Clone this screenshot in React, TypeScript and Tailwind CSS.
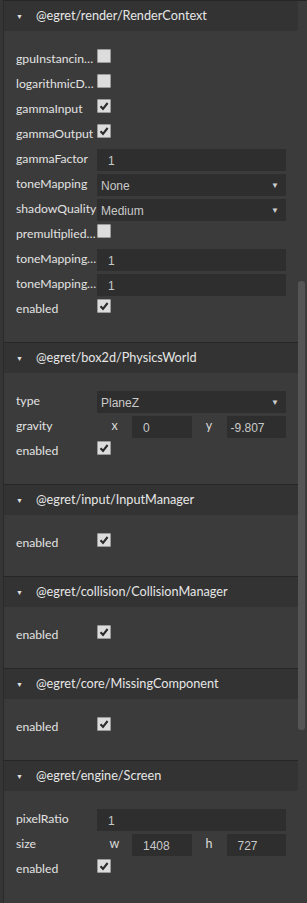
import React from "react";

type Row =
  | { kind: "check"; label: string; checked: boolean }
  | { kind: "number"; label: string; value: string }
  | { kind: "select"; label: string; value: string }
  | { kind: "vector"; label: string; a: [string, string]; b: [string, string]; tightB?: boolean };

type Section = { title: string; rows: Row[] };

const sections: Section[] = [
  {
    title: "@egret/render/RenderContext",
    rows: [
      { kind: "check", label: "gpuInstancingEnabled", checked: false },
      { kind: "check", label: "logarithmicDepthBuffer", checked: false },
      { kind: "check", label: "gammaInput", checked: true },
      { kind: "check", label: "gammaOutput", checked: true },
      { kind: "number", label: "gammaFactor", value: "1" },
      { kind: "select", label: "toneMapping", value: "None" },
      { kind: "select", label: "shadowQuality", value: "Medium" },
      { kind: "check", label: "premultipliedAlpha", checked: false },
      { kind: "number", label: "toneMappingExposure", value: "1" },
      { kind: "number", label: "toneMappingWhitePoint", value: "1" },
      { kind: "check", label: "enabled", checked: true },
    ],
  },
  {
    title: "@egret/box2d/PhysicsWorld",
    rows: [
      { kind: "select", label: "type", value: "PlaneZ" },
      { kind: "vector", label: "gravity", a: ["x", "0"], b: ["y", "-9.807"], tightB: true },
      { kind: "check", label: "enabled", checked: true },
    ],
  },
  { title: "@egret/input/InputManager", rows: [{ kind: "check", label: "enabled", checked: true }] },
  { title: "@egret/collision/CollisionManager", rows: [{ kind: "check", label: "enabled", checked: true }] },
  { title: "@egret/core/MissingComponent", rows: [{ kind: "check", label: "enabled", checked: true }] },
  {
    title: "@egret/engine/Screen",
    rows: [
      { kind: "number", label: "pixelRatio", value: "1" },
      { kind: "vector", label: "size", a: ["w", "1408"], b: ["h", "727"] },
      { kind: "check", label: "enabled", checked: true },
    ],
  },
];

const valueFont = "font-['Liberation_Sans',Arial,sans-serif] text-[12px] text-[#c9c9c9]";

function Checkbox({ checked }: { checked: boolean }) {
  return (
    <div className="flex h-[14px] w-[14px] items-center justify-center rounded-[1px] border border-[#9a9a9a] bg-[#dcdcdc]">
      {checked && (
        <svg width="10" height="10" viewBox="0 0 10 10">
          <path d="M1.5 5.3 L4 7.8 L8.6 2" fill="none" stroke="#2b2b2b" strokeWidth="2.1" />
        </svg>
      )}
    </div>
  );
}

function Field({ row }: { row: Row }) {
  if (row.kind === "check") {
    return <Checkbox checked={row.checked} />;
  }
  if (row.kind === "number") {
    return (
      <div className={`flex h-[22px] flex-1 items-center bg-[#2e2e2e] pl-[11px] pt-[2px] ${valueFont}`}>{row.value}</div>
    );
  }
  if (row.kind === "select") {
    return (
      <div className={`flex h-[22px] flex-1 items-center justify-between bg-[#2e2e2e] pl-[4px] pr-[7px] pt-[2px] ${valueFont}`}>
        <span>{row.value}</span>
        <span className="text-[8px] text-[#cfcfcf]">▼</span>
      </div>
    );
  }
  return (
    <div className="flex flex-1">
      <div className="flex flex-1">
        <span className="w-[35px] pt-[1px] text-center text-[12.5px] text-[#dcdcdc]">{row.a[0]}</span>
        <div className={`flex h-[22px] flex-1 items-center bg-[#2e2e2e] pl-[11px] pt-[2px] ${valueFont}`}>{row.a[1]}</div>
      </div>
      <div className="flex flex-1">
        <span className="w-[35px] pt-[1px] text-center text-[12.5px] text-[#dcdcdc]">{row.b[0]}</span>
        <div
          className={`flex h-[22px] flex-1 items-center bg-[#2e2e2e] pt-[2px] ${row.tightB ? "pl-[4px]" : "pl-[11px]"} ${valueFont}`}
        >
          {row.b[1]}
        </div>
      </div>
    </div>
  );
}

function Panel({ section }: { section: Section }) {
  return (
    <div className="border-t border-[#262626]">
      <div className="flex h-[30px] items-center bg-[#333333] pl-[12px]">
        <span className="w-[20px] text-[7px] text-[#e0e0e0]">▼</span>
        <span className="text-[12.7px] text-[#e6e6e6]">{section.title}</span>
      </div>
      <div className="pb-[21px] pl-[12px] pr-[12px] pt-[15px]">
        {section.rows.map((row, i) => (
          <div key={i} className="flex h-[25px] items-start pt-[3px]">
            <div className="h-[22px] w-[81px] shrink-0 truncate text-[12.2px] leading-[20px] text-[#e2e2e2]">
              {row.label}
            </div>
            <Field row={row} />
          </div>
        ))}
      </div>
    </div>
  );
}

export default function App() {
  return (
    <div className="flex h-[903px] w-[307px] overflow-hidden bg-[#3b3b3b] font-['Lato','Noto_Sans',sans-serif]">
      <div className="w-[4px] shrink-0 border-r border-[#2a2a2a] bg-[#353535]" />
      <div className="flex w-[294px] shrink-0 flex-col">
        {sections.map((s) => (
          <Panel key={s.title} section={s} />
        ))}
      </div>
      <div className="flex w-[9px] shrink-0 flex-col border-t border-[#262626] pt-[280px]">
        <div className="h-[449px] w-[7px] rounded-[3px] bg-[#555555]" />
      </div>
    </div>
  );
}
